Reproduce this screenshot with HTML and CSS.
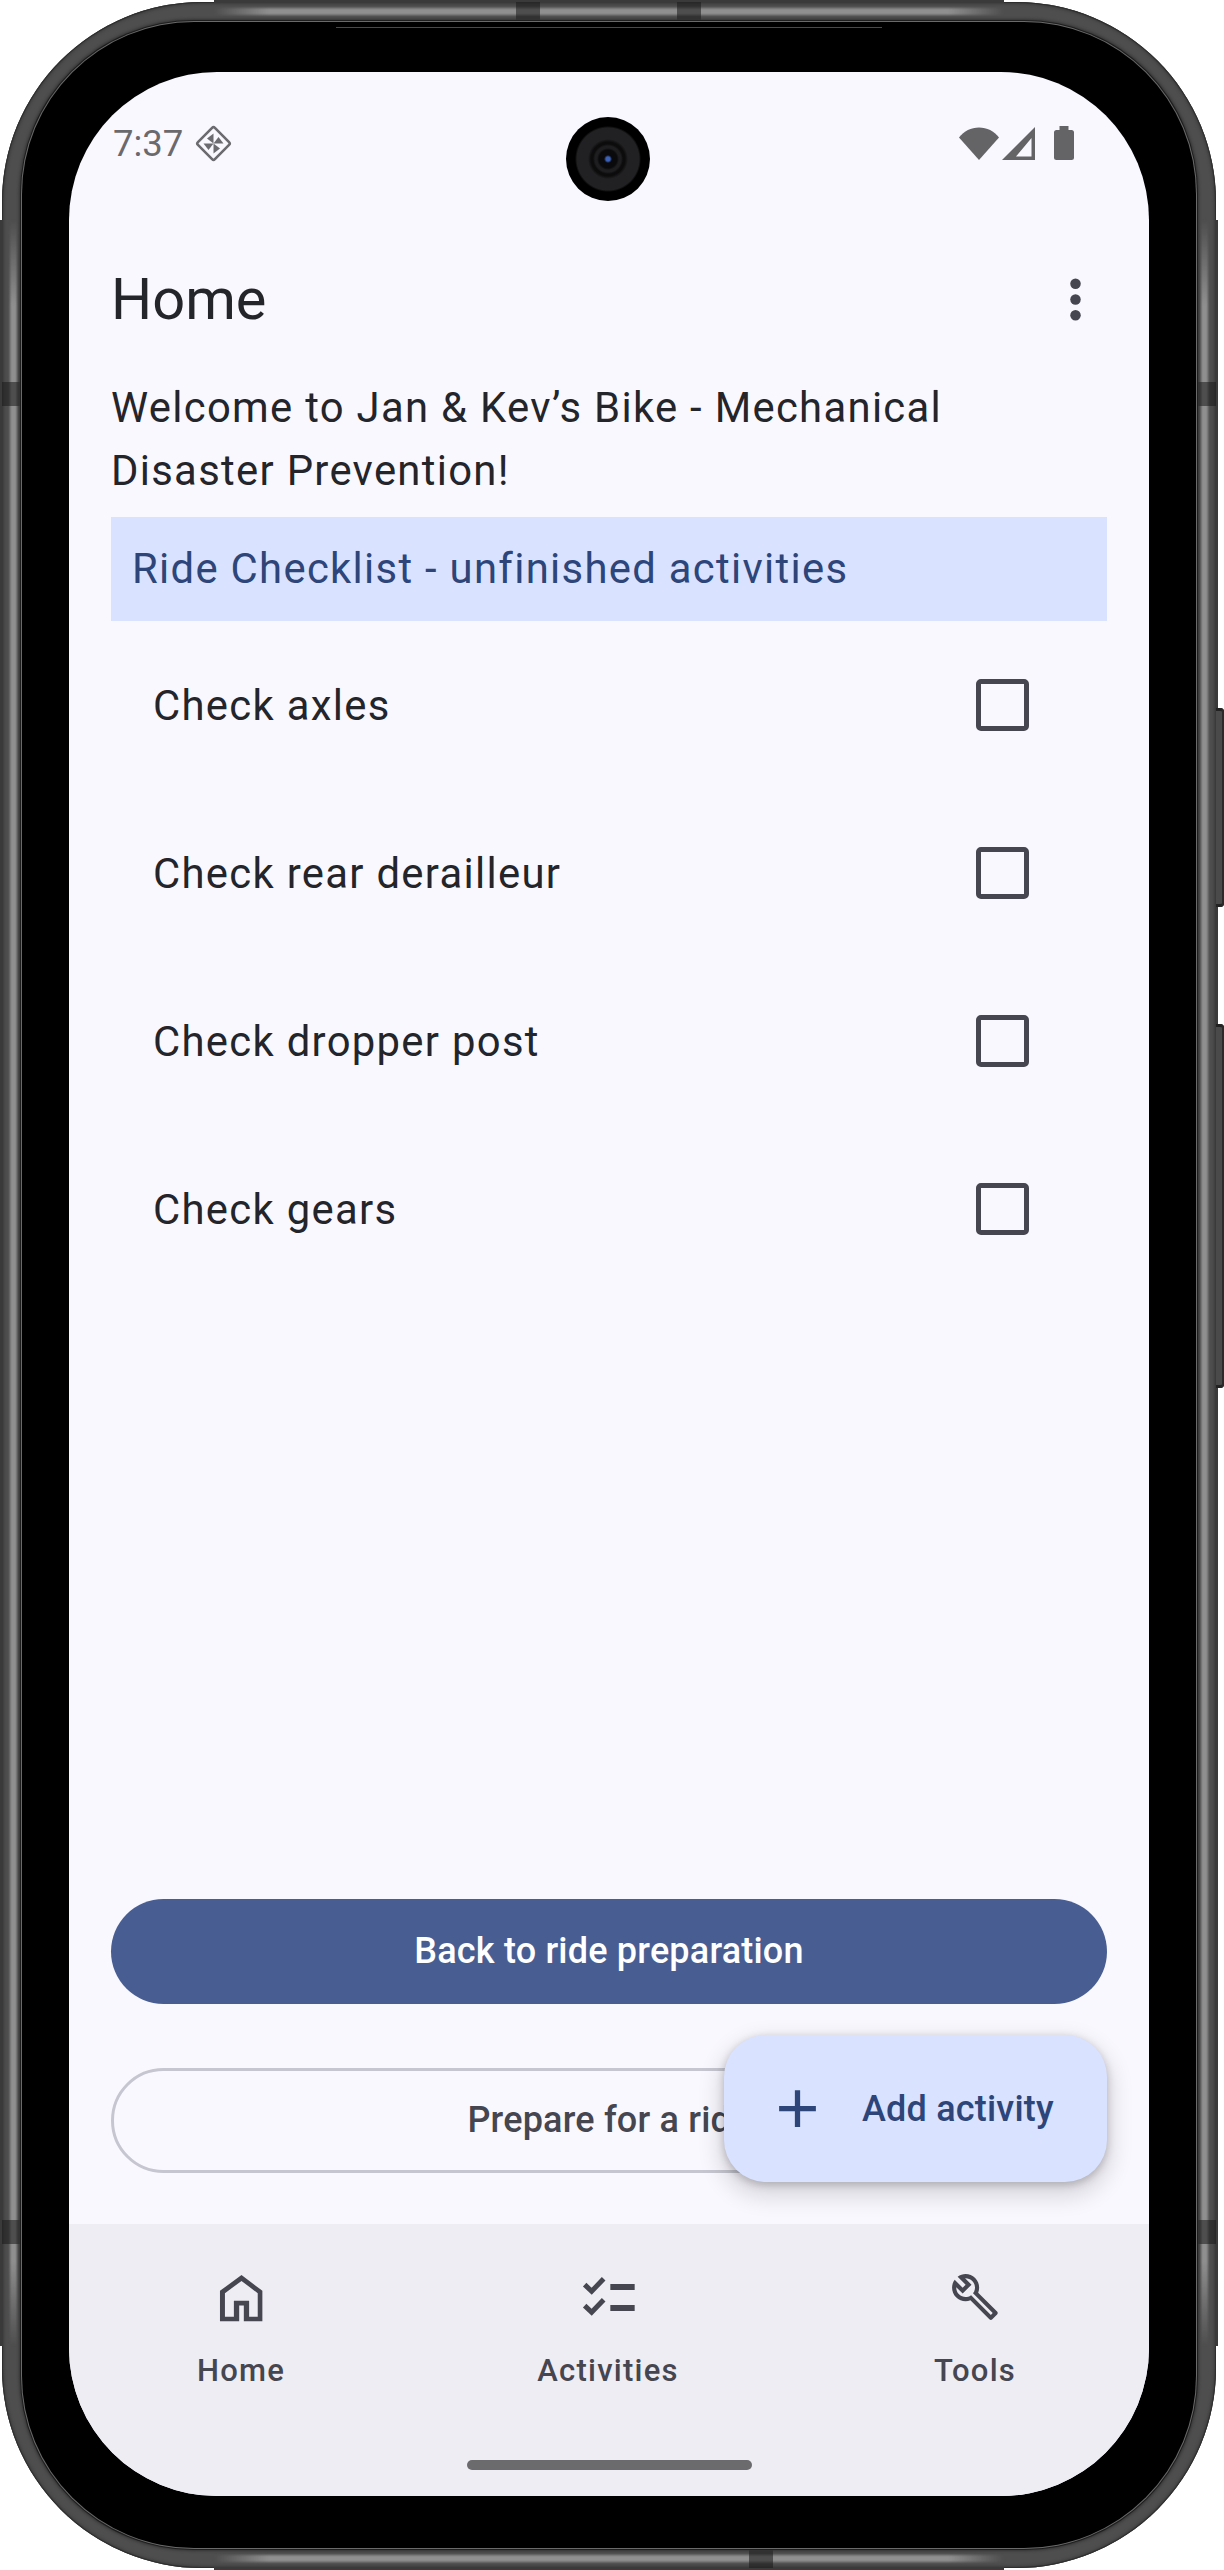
FILE: index.html
```html
<!DOCTYPE html>
<html lang="en">
<head>
    <meta charset="UTF-8">
    <title>Home</title>
    <link rel="stylesheet" href="styles.css">
</head>
<body>
<div class="phone">
    <!-- frame details -->
    <i class="edge edge-top"></i>
    <i class="edge edge-bottom"></i>
    <i class="edge edge-left"></i>
    <i class="edge edge-right"></i>
    <i class="band band-top1"></i>
    <i class="band band-top2"></i>
    <i class="band band-bottom"></i>
    <i class="band band-left1"></i>
    <i class="band band-left2"></i>
    <i class="band band-right1"></i>
    <i class="band band-right2"></i>
    <i class="side-btn side-btn1"></i>
    <i class="side-btn side-btn2"></i>

    <div class="bezel">
        <i class="speaker"></i>
        <div class="screen">
            <i class="camera"></i>

            <div class="status">
                <span class="time">7:37</span>
                <svg class="diamond" width="37" height="37" viewBox="0 0 37 37">
                    <rect x="6.5" y="6.5" width="24" height="24" rx="2" transform="rotate(45 18.5 18.5)" fill="none" stroke="#6c6c70" stroke-width="2.6"/>
                    <g fill="#6c6c70">
                        <path d="M18.5 8.5V18.5L12 13.5z"/>
                        <path d="M28.5 18.5H18.5L23.5 12z"/>
                        <path d="M18.5 28.5V18.5L25 23.5z"/>
                        <path d="M8.5 18.5H18.5L13.5 25z"/>
                    </g>
                </svg>
                <div class="status-icons">
                    <svg class="wifi" width="40" height="33" viewBox="0 0 40 33">
                        <path d="M0 10.5C5 4 12 .5 20 .5S35 4 40 10.5L20 33z" fill="#646467"/>
                    </svg>
                    <svg class="signal" width="33" height="33" viewBox="0 0 33 33">
                        <path fill-rule="evenodd" d="M0 33L33 0V33zM14 29.5H29.5V11z" fill="#646467"/>
                    </svg>
                    <svg class="battery" width="20" height="34" viewBox="0 0 20 34">
                        <path d="M5.5 0H14.5V4H17.5A2.5 2.5 0 0 1 20 6.5V31.5A2.5 2.5 0 0 1 17.5 34H2.5A2.5 2.5 0 0 1 0 31.5V6.5A2.5 2.5 0 0 1 2.5 4H5.5z" fill="#646467"/>
                    </svg>
                </div>
            </div>

            <div class="appbar">
                <h1>Home</h1>
                <svg class="more" width="63" height="63" viewBox="0 0 24 24">
                    <circle cx="12" cy="6" r="2"/>
                    <circle cx="12" cy="12" r="2"/>
                    <circle cx="12" cy="18" r="2"/>
                </svg>
            </div>

            <div class="main">
                <p class="welcome">Welcome to Jan &amp; Kev’s Bike - Mechanical Disaster Prevention!</p>
                <div class="list-head">Ride Checklist - unfinished activities</div>
                <ul class="checklist">
                    <li>Check axles<span class="check"></span></li>
                    <li>Check rear derailleur<span class="check"></span></li>
                    <li>Check dropper post<span class="check"></span></li>
                    <li>Check gears<span class="check"></span></li>
                </ul>

                <div class="actions">
                    <div class="btn btn-fill">Back to ride preparation</div>
                    <div class="btn btn-line">Prepare for a ride</div>
                </div>

                <div class="fab">
                    <svg width="63" height="63" viewBox="0 0 24 24">
                        <path d="M19 13h-6v6h-2v-6H5v-2h6V5h2v6h6z" fill="#2d4578"/>
                    </svg>
                    <span>Add activity</span>
                </div>
            </div>

            <div class="nav">
                <div class="nav-items">
                    <div class="nav-item">
                        <span class="nav-icon">
                            <svg width="53" height="53" viewBox="345 27 160 160">
                                <path fill-rule="evenodd" d="M425 42L488 90V182H432V134H418V182H360V90zM425 60L375 97V168H402V120H448V168H474V97z" fill="#45464f"/>
                            </svg>
                        </span>
                        Home
                    </div>
                    <div class="nav-item">
                        <span class="nav-icon">
                            <svg width="63" height="63" viewBox="172 15 189 189">
                                <path d="M195 74L216 94L252 56M195 137L216 157L252 119" fill="none" stroke="#45464f" stroke-width="15"/>
                                <path d="M272 72H345V90H272zM272 135H345V153H272z" fill="#45464f"/>
                            </svg>
                        </span>
                        Activities
                    </div>
                    <div class="nav-item">
                        <span class="nav-icon">
                            <svg width="50" height="50" viewBox="0 0 24 24">
                                <path d="M22.61 18.99l-9.08-9.08c.93-2.34.45-5.1-1.44-7C9.79.61 6.21.4 3.66 2.26L7.5 6.11 6.08 7.52 2.25 3.69C.39 6.23.6 9.82 2.9 12.11c1.86 1.86 4.57 2.35 6.89 1.48l9.11 9.11c.39.39 1.02.39 1.41 0l2.3-2.3c.4-.38.4-1.01 0-1.41zm-3 1.6l-9.46-9.46c-.61.45-1.29.72-2 .82-1.36.2-2.79-.21-3.83-1.25C3.37 9.76 2.93 8.5 3 7.26l3.09 3.09 4.24-4.24-3.09-3.09c1.24-.07 2.49.37 3.44 1.31 1.08 1.08 1.49 2.57 1.24 3.96-.12.71-.42 1.37-.88 1.96l9.45 9.45-.88.88z" fill="#45464f"/>
                            </svg>
                        </span>
                        Tools
                    </div>
                </div>
                <i class="home-bar"></i>
            </div>
        </div>
    </div>
</div>
</body>
</html>
```

FILE: styles.css
```css
* {
    margin: 0;
    padding: 0;
    list-style: none;
    box-sizing: border-box;
}

body {
    background-color: #fff;
    font-family: Roboto, "Liberation Sans", sans-serif;
    width: 1224px;
    height: 2570px;
    overflow: hidden;
}

/* ---------- phone frame ---------- */
.phone {
    position: relative;
    width: 1214px;
    height: 2566px;
    margin: 2px;
    padding: 20px;
    border-radius: 200px;
    background-color: #4e4e4e;
    box-shadow: inset 0 0 0 1px #2e2e2e, inset 0 0 3px 2px #3c3c3c;
}

.bezel {
    position: relative;
    height: 100%;
    padding: 50px 47px 51px;
    border-radius: 172px;
    background-color: #000;
    box-shadow: 0 0 0 1px #6a6a6a, 0 0 0 2px #1e1e1e, 0 0 3px 3px #333;
}

.edge {
    position: absolute;
    background-color: #3a3a3a;
}

/* light stripe on the straight part of the metal ring */
.edge::after {
    content: "";
    position: absolute;
}

.edge-top, .edge-bottom {
    left: 212px;
    width: 790px;
    height: 3px;
}

.edge-left, .edge-right {
    top: 218px;
    width: 3px;
    height: 2126px;
}

.edge-top { top: -2px; }
.edge-bottom { bottom: -2px; }
.edge-left { left: -2px; }
.edge-right { right: -2px; }

.edge-top::after, .edge-bottom::after {
    left: 0;
    right: 0;
    height: 7px;
    background: linear-gradient(90deg, transparent, #8f8f8f 7%, #8f8f8f 93%, transparent);
    filter: blur(1px);
}

.edge-left::after, .edge-right::after {
    top: 0;
    bottom: 0;
    width: 7px;
    background: linear-gradient(180deg, transparent, #8f8f8f 4%, #8f8f8f 96%, transparent);
    filter: blur(1px);
}

.edge-top::after { top: 8px; }
.edge-bottom::after { bottom: 8px; }
.edge-left::after { left: 10px; }
.edge-right::after { right: 10px; }

.band {
    position: absolute;
    background-color: rgba(25, 25, 25, 0.55);
}

.band-top1, .band-top2, .band-bottom {
    width: 24px;
    height: 20px;
}

.band-left1, .band-left2, .band-right1, .band-right2 {
    width: 20px;
    height: 24px;
}

.band-top1 { top: 0; left: 514px; }
.band-top2 { top: 0; left: 675px; }
.band-bottom { bottom: 0; left: 747px; }
.band-left1 { left: 0; top: 380px; }
.band-left2 { left: 0; top: 2218px; }
.band-right1 { right: 0; top: 380px; }
.band-right2 { right: 0; top: 2218px; }

.side-btn {
    position: absolute;
    left: 1214px;
    width: 8px;
    border-radius: 0 4px 4px 0;
    background-color: #4a4a4a;
    box-shadow: inset -2px 0 0 #2a2a2a, inset 0 3px 0 #222, inset 0 -3px 0 #222;
}

.side-btn1 { top: 706px; height: 199px; }
.side-btn2 { top: 1022px; height: 364px; }

.speaker {
    position: absolute;
    top: 0;
    left: 314px;
    width: 546px;
    height: 6px;
    background-color: #000;
    border-bottom: 1px solid #4a4a4a;
}

/* ---------- screen ---------- */
.screen {
    position: relative;
    display: flex;
    flex-direction: column;
    width: 1080px;
    height: 2424px;
    border-radius: 148px;
    overflow: hidden;
    background-color: #faf8ff;
    color: #1a1b20;
}

.camera {
    position: absolute;
    top: 45px;
    left: 497px;
    width: 84px;
    height: 84px;
    border-radius: 50%;
    background: radial-gradient(circle at center, #3c62b8 0, #3c62b8 2px, #0a0a0c 4px, #0a0a0c 9px, #1e1e20 11px, #1e1e20 13px, #0c0c0d 15px, #0c0c0d 17px, #212123 20px, #212123 31px, #000 33px);
}

.status {
    display: flex;
    align-items: center;
    height: 142px;
    padding: 0 75px 0 44px;
}

.time {
    font-size: 36.5px;
    color: #6a6a6e;
}

.diamond {
    margin-left: 12px;
}

.status-icons {
    display: flex;
    align-items: center;
    margin-left: auto;
}

.signal {
    margin-left: 3px;
}

.battery {
    margin-left: 19px;
}

.appbar {
    display: flex;
    align-items: center;
    justify-content: space-between;
    height: 162px;
    padding: 8px 42px 0 42px;
}

.appbar h1 {
    font-size: 57.75px;
    font-weight: 400;
    color: #24252a;
}

.more {
    fill: #45464f;
}

.main {
    position: relative;
    flex: 1;
    display: flex;
    flex-direction: column;
    padding: 0 42px 51.5px;
}

.welcome {
    font-size: 41.8px;
    line-height: 63px;
    letter-spacing: 1.31px;
    color: #24252a;
}

.list-head {
    height: 104px;
    margin-top: 14.5px;
    padding-left: 21px;
    font-size: 41.8px;
    line-height: 104px;
    letter-spacing: 1.31px;
    color: #2d4578;
    background-color: #d9e2ff;
}

.checklist li {
    display: flex;
    align-items: center;
    justify-content: space-between;
    height: 168px;
    padding: 2px 78px 0 42px;
    font-size: 41.8px;
    letter-spacing: 1.31px;
    color: #24252a;
}

.check {
    width: 53px;
    height: 52px;
    margin-top: -2px;
    border: 5px solid #45464f;
    border-radius: 5px;
}

.actions {
    display: flex;
    flex-direction: column;
    gap: 64px;
    margin-top: auto;
}

.btn {
    height: 105px;
    border-radius: 53px;
    font-size: 36px;
    font-weight: 500;
    letter-spacing: 0.2px;
    line-height: 105px;
    text-align: center;
}

.btn-fill {
    color: #fff;
    background-color: #485e92;
}

.btn-line {
    color: #45464f;
    line-height: 99px;
    border: 3px solid #c6c6d0;
}

.fab {
    position: absolute;
    right: 42px;
    bottom: 42px;
    display: flex;
    align-items: center;
    gap: 33px;
    width: 383px;
    height: 147px;
    padding-left: 42px;
    border-radius: 42px;
    font-size: 36px;
    font-weight: 500;
    letter-spacing: 0.2px;
    color: #2d4578;
    background-color: #d9e2ff;
    box-shadow: 0 10px 21px 6px rgba(0, 0, 0, 0.12), 0 3px 8px rgba(0, 0, 0, 0.22);
}

/* ---------- bottom nav ---------- */
.nav {
    position: relative;
    display: flex;
    flex-direction: column;
    align-items: center;
    height: 272px;
    padding-top: 41px;
    background-color: #eeedf4;
}

.nav-items {
    display: flex;
    justify-content: space-between;
    width: 100%;
    padding: 0 114px 0 112px;
}

.nav-item {
    display: flex;
    flex-direction: column;
    align-items: center;
    gap: 22px;
    width: 120px;
    font-size: 31px;
    font-weight: 500;
    line-height: 42px;
    letter-spacing: 1.25px;
    color: #45464f;
    white-space: nowrap;
}

.nav-icon {
    display: flex;
    align-items: center;
    justify-content: center;
    height: 63px;
}

.home-bar {
    width: 285px;
    height: 10px;
    margin-top: 68px;
    border-radius: 5px;
    background-color: #6b6b6e;
}
```
